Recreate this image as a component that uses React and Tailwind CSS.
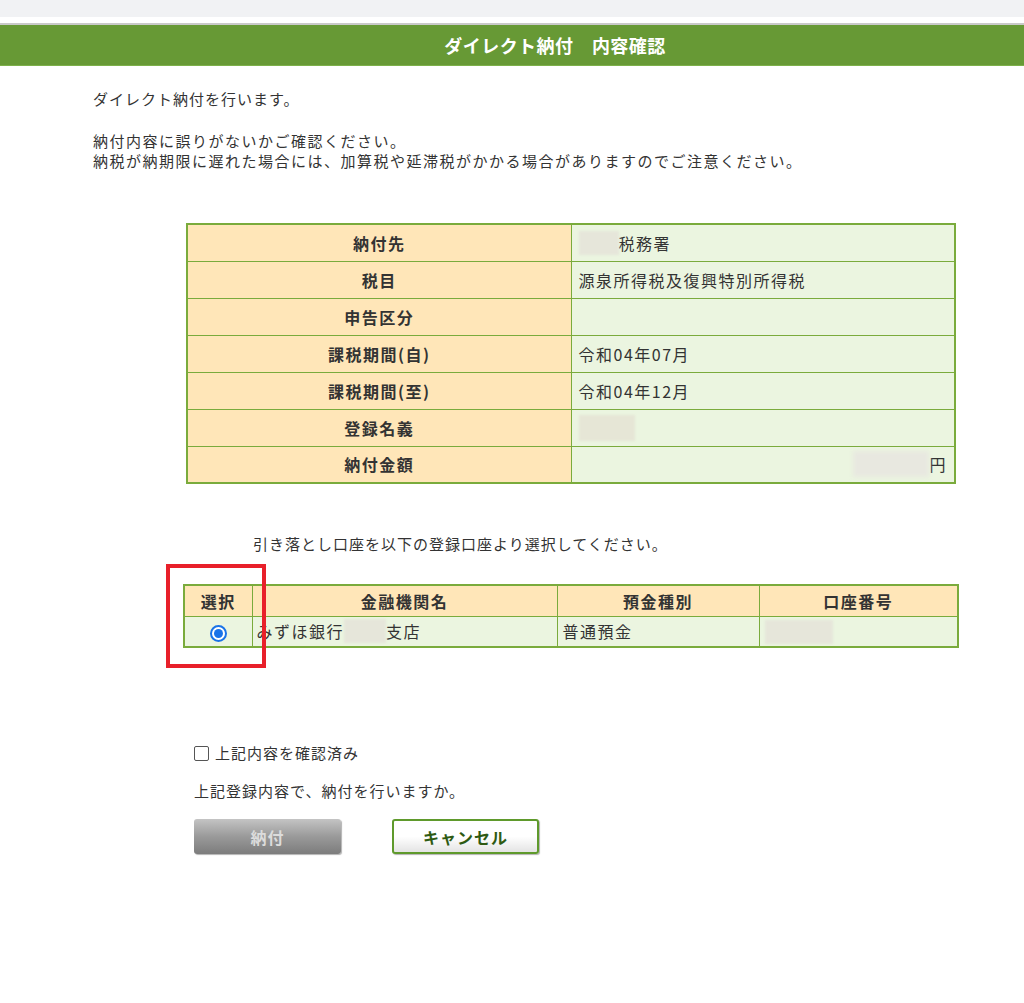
import React from 'react';

const jp = { fontFamily: '"Noto Sans CJK JP", "Noto Sans", sans-serif' };

// 内容確認テーブルの行
const rows = [
  { label: '納付先', value: <span className="flex items-center"><span className="inline-block w-[40px] h-[24px] bg-[#e6e6da] blur-[1px]" />税務署</span> },
  { label: '税目', value: '源泉所得税及復興特別所得税' },
  { label: '申告区分', value: '' },
  { label: '課税期間(自)', value: '令和04年07月' },
  { label: '課税期間(至)', value: '令和04年12月' },
  { label: '登録名義', value: <span className="inline-block w-[56px] h-[26px] bg-[#e6e6d6] blur-[1px] align-middle" /> },
  {
    label: '納付金額',
    value: (
      <span className="flex items-center justify-end">
        <span className="inline-block w-[76px] h-[26px] bg-[#e8e8e0] blur-[2px]" />
        円
      </span>
    ),
  },
];

const Blur = ({ w }) => (
  <span className={`inline-block ${w} h-[24px] bg-[#e6e6da] blur-[1px] align-middle`} />
);

const App = () => {
  return (
    <div className="w-[1024px] h-[1003px] bg-white text-[#333] text-[15px] leading-[20px] tracking-[1px]" style={jp}>
      {/* top bar */}
      <div className="h-[17px] bg-[#f1f2f4]" />
      <div className="h-[6px] bg-white" />
      <div className="h-[2px] bg-[#c9c9c9]" />
      <div className="h-[41px] bg-[#679935] border-b border-[#7db04a] flex items-center justify-center pl-[86px]">
        <span className="text-white text-[18px] font-bold tracking-wide">ダイレクト納付　内容確認</span>
      </div>

      {/* 説明文 */}
      <div className="pl-[93px] pt-[23px]">
        <p>ダイレクト納付を行います。</p>
        <p className="mt-[22px] tracking-[1.5px]">納付内容に誤りがないかご確認ください。</p>
        <p className="tracking-[1.5px]">納税が納期限に遅れた場合には、加算税や延滞税がかかる場合がありますのでご注意ください。</p>
      </div>

      {/* 内容テーブル */}
      <div className="pl-[186px] pt-[52px]">
        <table className="w-[770px] border-collapse border-2 border-[#7aab3c] text-[16px] tracking-[1.5px]">
          <tbody>
            {rows.map((r) => (
              <tr key={r.label} className="h-[37px]">
                <th className="w-[384px] border border-[#7aab3c] bg-[#ffe6b8] text-[#333] font-bold text-center">
                  {r.label}
                </th>
                <td className="border border-[#7aab3c] bg-[#ebf5e0] px-[7px]">{r.value}</td>
              </tr>
            ))}
          </tbody>
        </table>
      </div>

      <p className="pl-[253px] mt-[50px]">引き落とし口座を以下の登録口座より選択してください。</p>

      {/* 口座テーブル */}
      <div className="relative ml-[183px] mt-[30px] w-[776px]">
        <table className="w-full border-collapse border-2 border-[#7aab3c] text-[16px] tracking-[1.5px]">
          <thead>
            <tr className="h-[31px] bg-[#ffe6b8]">
              <th className="w-[68px] border border-[#7aab3c] font-bold">選択</th>
              <th className="w-[305px] border border-[#7aab3c] font-bold">金融機関名</th>
              <th className="w-[202px] border border-[#7aab3c] font-bold">預金種別</th>
              <th className="border border-[#7aab3c] font-bold">口座番号</th>
            </tr>
          </thead>
          <tbody>
            <tr className="h-[31px] bg-[#ebf5e0]">
              <td className="border border-[#7aab3c] text-center">
                <span className="inline-flex items-center justify-center w-[17px] h-[17px] rounded-full border-2 border-[#1a73e8] bg-white align-middle">
                  <span className="w-[9px] h-[9px] rounded-full bg-[#1a73e8]" />
                </span>
              </td>
              <td className="border border-[#7aab3c] px-[4px]">
                <span className="flex items-center">みずほ銀行<Blur w="w-[42px]" />支店</span>
              </td>
              <td className="border border-[#7aab3c] px-[5px]">普通預金</td>
              <td className="border border-[#7aab3c] px-[5px]"><Blur w="w-[68px]" /></td>
            </tr>
          </tbody>
        </table>
        {/* 赤枠 */}
        <div className="absolute left-[-17px] top-[-20px] w-[100px] h-[104px] border-4 border-[#e8202a] pointer-events-none" />
      </div>

      {/* 確認 */}
      <div className="pl-[194px] mt-[95px]">
        <label className="flex items-center gap-[6px]">
          <span className="w-[15px] h-[15px] border border-[#555] rounded-[2px] bg-white" />
          <span>上記内容を確認済み</span>
        </label>
        <p className="mt-[18px]">上記登録内容で、納付を行いますか。</p>
        <div className="flex gap-[51px] mt-[18px]">
          <button className="w-[147px] h-[35px] rounded-[3px] bg-gradient-to-b from-[#c4c4c4] via-[#9a9a9a] to-[#7c7c7c] text-[#dcdcdc] font-bold text-[16px] shadow-[1px_1px_1px_rgba(0,0,0,0.3)]">
            納付
          </button>
          <button className="w-[147px] h-[35px] rounded-[3px] border-2 border-[#5f9a2c] bg-gradient-to-b from-white via-white to-[#e4e4e4] text-[#2e5a12] font-bold text-[16px] shadow-[1px_1px_1px_rgba(0,0,0,0.3)]">
            キャンセル
          </button>
        </div>
      </div>
    </div>
  );
};

export default App;
